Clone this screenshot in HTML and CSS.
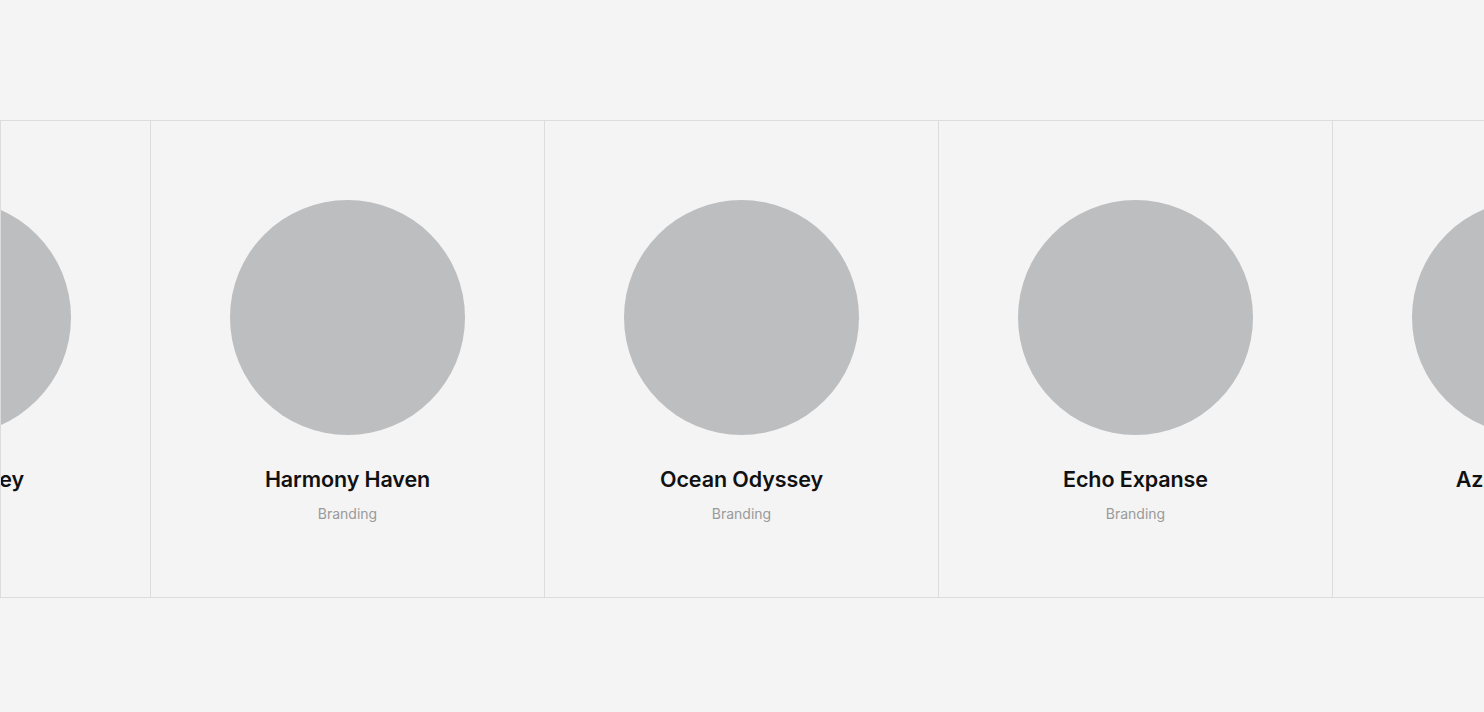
FILE: index.html
```html
<!DOCTYPE html>
<html lang="en">
<head>
<meta charset="utf-8">
<title>Projects</title>
<link rel="stylesheet" href="styles.css">
</head>
<body>
<section class="strip">
  <div class="track">
    <article class="card">
      <div class="thumb"></div>
      <h3 class="title">Golden Valley</h3>
      <p class="tag">Branding</p>
    </article>
    <article class="card">
      <div class="thumb"></div>
      <h3 class="title">Harmony Haven</h3>
      <p class="tag">Branding</p>
    </article>
    <article class="card">
      <div class="thumb"></div>
      <h3 class="title">Ocean Odyssey</h3>
      <p class="tag">Branding</p>
    </article>
    <article class="card">
      <div class="thumb"></div>
      <h3 class="title">Echo Expanse</h3>
      <p class="tag">Branding</p>
    </article>
    <article class="card">
      <div class="thumb"></div>
      <h3 class="title">Azure Horizon</h3>
      <p class="tag">Branding</p>
    </article>
  </div>
</section>
</body>
</html>
```
FILE: styles.css
```css
html, body {
  margin: 0;
  padding: 0;
  background: #f4f4f4;
  font-family: Inter, "Noto Sans", sans-serif;
  overflow: hidden;
}

.strip {
  margin-top: 120px;
  border-top: 1px solid #dcdcdc;
  border-bottom: 1px solid #dcdcdc;
  border-left: 1px solid #dcdcdc;
  overflow: hidden;
  height: 476px;
}

.track {
  display: flex;
  margin-left: -245px;
  height: 100%;
}

.card {
  flex: 0 0 394px;
  box-sizing: border-box;
  border-left: 1px solid #dcdcdc;
  display: flex;
  flex-direction: column;
  align-items: center;
  padding-top: 79px;
}

.thumb {
  width: 235px;
  height: 235px;
  border-radius: 50%;
  background: #bdbec0;
}

.title {
  margin: 30px 0 0;
  font-size: 21.5px;
  line-height: 28px;
  font-weight: 600;
  color: #111111;
  letter-spacing: -0.1px;
  white-space: nowrap;
}

.tag {
  margin: 12px 0 0;
  font-size: 14px;
  line-height: 18px;
  color: #9a9a9a;
}
```
